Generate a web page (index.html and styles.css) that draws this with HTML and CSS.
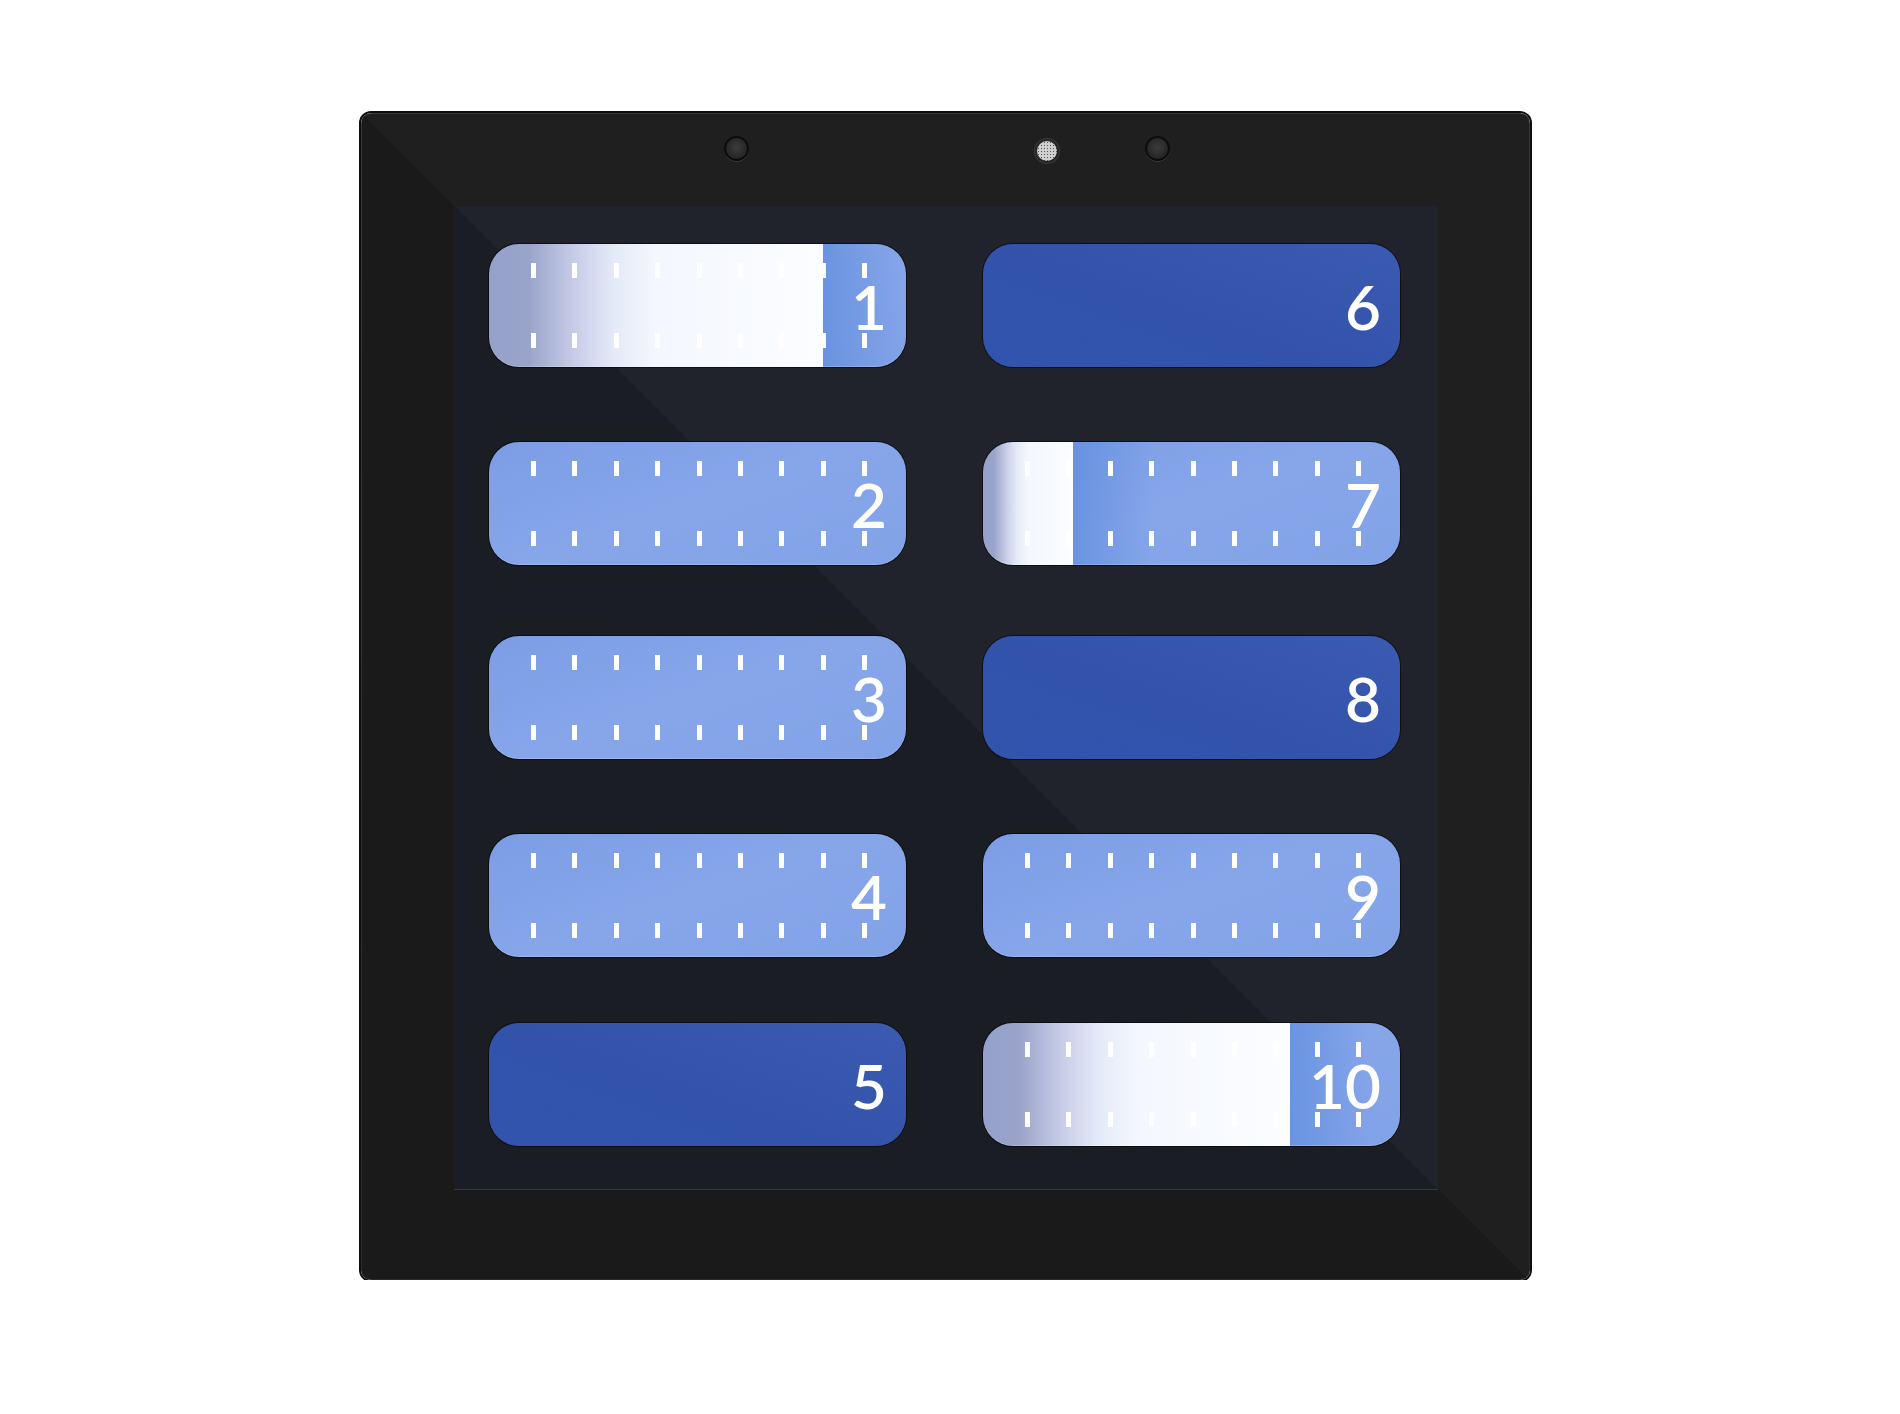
FILE: index.html
```html
<!DOCTYPE html>
<html lang="en">
<head>
    <meta charset="UTF-8">
    <meta name="viewport" content="width=device-width, initial-scale=1.0">
    <title>Scene Panel</title>
    <link rel="stylesheet" href="styles.css">
</head>
<body>
    <div class="device">
        <div class="bezel">
            <div class="sensors">
                <span class="sensor"></span>
                <span class="sensor mesh"></span>
                <span class="sensor"></span>
            </div>
            <div class="screen">
                <div class="key light filled" style="--fill: 334px"><span>1</span></div>
                <div class="key light"><span>2</span></div>
                <div class="key light"><span>3</span></div>
                <div class="key light"><span>4</span></div>
                <div class="key dark"><span>5</span></div>
                <div class="key dark"><span>6</span></div>
                <div class="key light filled" style="--fill: 90px"><span>7</span></div>
                <div class="key dark"><span>8</span></div>
                <div class="key light"><span>9</span></div>
                <div class="key light filled" style="--fill: 307px"><span>10</span></div>
            </div>
        </div>
    </div>
</body>
</html>
```

FILE: styles.css
```css
body {
    margin: 0;
    padding: 113px 0 0 361px;
    background: #fff;
    font-family: "Lato", "Liberation Sans", sans-serif;
}
.device {
    width: fit-content;
    padding: 1px;
    background: linear-gradient(#3a3a3a, #2a2a2a);
    border-radius: 10px;
    box-shadow: 0 0 0 2px #0e0e0e;
}
.bezel {
    padding: 0 91px 90px 92px;
    border-radius: 8px;
    background: linear-gradient(to top right, #1a1a1a 50%, #1f1f1f 50%);
}
.sensors {
    height: 92px;
    box-sizing: border-box;
    padding: 22px 0 0 270px;
    display: flex;
    align-items: flex-start;
}
.sensor {
    width: 25px;
    height: 25px;
    box-sizing: border-box;
    border-radius: 50%;
    border: 2px solid #0c0c0c;
    background: radial-gradient(circle at 50% 45%, #3c3c3c, #2a2a2a 55%, #1c1c1c);
    box-shadow: 0 1px 0 #3a3a3a;
}
.sensor.mesh {
    width: 24px;
    height: 24px;
    margin: 3px 0 0 286px;
    border-color: #262626;
    background: radial-gradient(circle, #555 35%, transparent 45%) 0 0 / 3px 3px, #cfcfcf;
    box-shadow: 0 0 0 1px #3a3a3a;
}
.sensor.mesh + .sensor {
    margin-left: 86px;
}
.screen {
    width: 984px;
    height: 983px;
    box-sizing: border-box;
    padding: 38px 38px 43px 35px;
    display: grid;
    grid-template-columns: 417px 417px;
    grid-template-rows: 198px 194px 198px 189px 123px;
    grid-auto-flow: column;
    column-gap: 77px;
    align-items: start;
    background: linear-gradient(to top right, #1b1d25 50%, #21232c 50%);
    box-shadow: 0 1px 0 #3a3936;
}
.key {
    height: 123px;
    border-radius: 30px;
    display: flex;
    align-items: center;
    justify-content: flex-end;
    padding-right: 19px;
    color: #fff;
    font-size: 62px;
    font-weight: 600;
    line-height: 1;
    box-shadow: 0 0 0 1px rgba(0, 0, 0, 0.55);
}
.key.dark {
    background: linear-gradient(200deg, #3b5bb3 0%, #3353ab 55%, #3254ad 100%);
}
.key.light {
    --fill: 0px;
    --shade: 0px;
    background:
        repeating-linear-gradient(90deg, #fff 0 5px, transparent 5px 41.4px) 42px 19px / 336px 15px no-repeat,
        repeating-linear-gradient(90deg, #fff 0 5px, transparent 5px 41.4px) 42px 89px / 336px 15px no-repeat,
        linear-gradient(90deg, #94a1ca 0%, #9aa4ca 12%, #c5cbe6 25%, #e4e9f8 37%, #f4f7fe 50%, #fbfdff 100%) 0 0 / var(--fill) 100% no-repeat,
        linear-gradient(90deg, rgba(96, 142, 222, 0.75), rgba(96, 142, 222, 0)) var(--fill) 0 / var(--shade) 100% no-repeat,
        linear-gradient(160deg, #7c9de5 0%, #87a6ea 50%, #82a2e7 100%);
    box-shadow: 0 0 0 1px rgba(0, 0, 0, 0.55), inset 0 -1px 0 rgba(255, 255, 255, 0.2);
}
.key.filled {
    --shade: 80px;
}
```
